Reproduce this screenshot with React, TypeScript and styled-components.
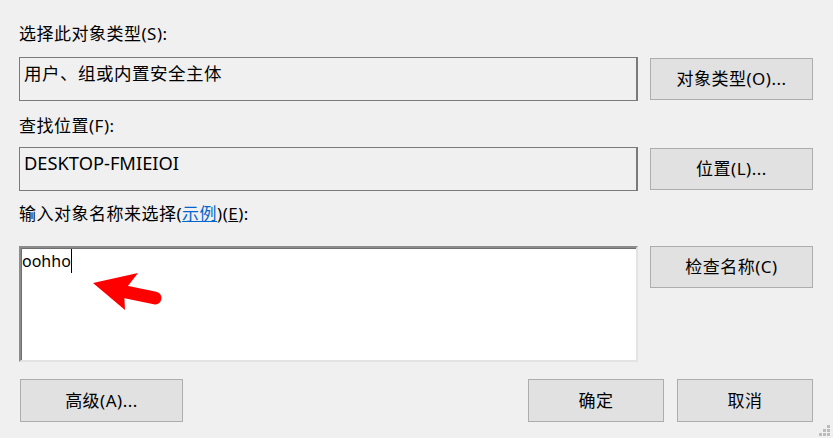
import React from "react";
import styled, { createGlobalStyle } from "styled-components";

const Global = createGlobalStyle`
  html, body { margin: 0; padding: 0; background: #f0f0f0; }
  body { font-family: "Noto Sans", "Noto Sans CJK SC", sans-serif; color: #000; }
`;

const Dialog = styled.div`
  position: relative;
  width: 833px;
  height: 438px;
  box-sizing: border-box;
  padding: 22px 20px 0 19px;
  background: #f0f0f0;
  overflow: hidden;
`;

const Label = styled.div<{ $mt: number; $mb: number }>`
  height: 24px;
  line-height: 24px;
  font-size: 17px;
  letter-spacing: 0.5px;
  margin-top: ${(p) => p.$mt}px;
  margin-bottom: ${(p) => p.$mb}px;
  white-space: nowrap;
`;

const Link = styled.span`
  color: #0066cc;
  text-decoration: underline;
`;

const Mnemonic = styled.span`
  text-decoration: underline;
`;

const Row = styled.div<{ $align: string }>`
  display: grid;
  grid-template-columns: 619px 163px;
  column-gap: 12px;
  align-items: ${(p) => p.$align};
`;

const Field = styled.div`
  height: 44px;
  box-sizing: border-box;
  border: 1px solid #7a7a7a;
  border-right-width: 2px;
  padding: 3px 4px 0 4px;
  font-size: 18.3px;
  line-height: 24px;
  white-space: nowrap;
`;

const FieldCjk = styled.span`
  font-size: 17.5px;
  letter-spacing: 0.5px;
`;

const InputBox = styled.div`
  position: relative;
  height: 116px;
  box-sizing: border-box;
  background: #fff;
  border-style: solid;
  border-width: 2px;
  border-color: #8c8c8c #e3e3e3 #e3e3e3 #8c8c8c;
  box-shadow: inset 1px 1px 0 #6f6f6f;
  padding: 1px 0 0 1px;
  font-size: 16px;
  line-height: 24px;
  display: flex;
  align-items: flex-start;
`;

const Caret = styled.span`
  display: inline-block;
  width: 0;
  height: 24px;
  border-left: 1px solid #000;
`;

const Arrow = styled.svg`
  position: absolute;
  left: 0;
  top: 0;
`;

const Button = styled.button<{ $w?: number; $h?: number }>`
  width: ${(p) => p.$w ?? 163}px;
  height: ${(p) => p.$h ?? 42}px;
  box-sizing: border-box;
  background: #e1e1e1;
  border: 1px solid #adadad;
  border-radius: 0;
  padding: 0;
  font-family: "Noto Sans", "Noto Sans CJK SC", sans-serif;
  font-size: 17px;
  letter-spacing: 0.5px;
  color: #000;
  line-height: 24px;
`;

const Footer = styled.div`
  display: flex;
  align-items: center;
  margin-top: 17px;
  margin-left: 1px;
`;

const Spacer = styled.div`
  flex: 1;
`;

const FooterGroup = styled.div`
  display: flex;
  gap: 13px;
`;

const Grip = styled.svg`
  position: absolute;
  right: 2px;
  bottom: 1px;
`;

export default function App() {
  return (
    <>
      <Global />
      <Dialog>
        <Label $mt={0} $mb={11}>
          选择此对象类型(S):
        </Label>
        <Row $align="center">
          <Field>
            <FieldCjk>用户、组或内置安全主体</FieldCjk>
          </Field>
          <Button>对象类型(O)...</Button>
        </Row>

        <Label $mt={13} $mb={9}>
          查找位置(F):
        </Label>
        <Row $align="center">
          <Field>DESKTOP-FMIEIOI</Field>
          <Button>位置(L)...</Button>
        </Row>

        <Label $mt={11} $mb={20}>
          输入对象名称来选择(<Link>示例</Link>)(<Mnemonic>E</Mnemonic>):
        </Label>
        <Row $align="start">
          <InputBox>
            <span>oohho</span>
            <Caret />
            <Arrow width="160" height="80" viewBox="0 0 160 80">
              <line x1="100" y1="43" x2="134" y2="50" stroke="#fe0000" strokeWidth="13" strokeLinecap="round" />
              <polygon points="72,35 117,25 103,43 104,62" fill="#fe0000" />
            </Arrow>
          </InputBox>
          <Button>检查名称(C)</Button>
        </Row>

        <Footer>
          <Button $h={43}>高级(A)...</Button>
          <Spacer />
          <FooterGroup>
            <Button $w={136} $h={43}>确定</Button>
            <Button $w={136} $h={43}>取消</Button>
          </FooterGroup>
        </Footer>

        <Grip width="12" height="12" viewBox="0 0 12 12">
          <rect x="8" y="0" width="3" height="3" fill="#bcbcbc" />
          <rect x="4" y="4" width="3" height="3" fill="#bcbcbc" />
          <rect x="8" y="4" width="3" height="3" fill="#bcbcbc" />
          <rect x="0" y="8" width="3" height="3" fill="#bcbcbc" />
          <rect x="4" y="8" width="3" height="3" fill="#bcbcbc" />
          <rect x="8" y="8" width="3" height="3" fill="#bcbcbc" />
        </Grip>
      </Dialog>
    </>
  );
}
